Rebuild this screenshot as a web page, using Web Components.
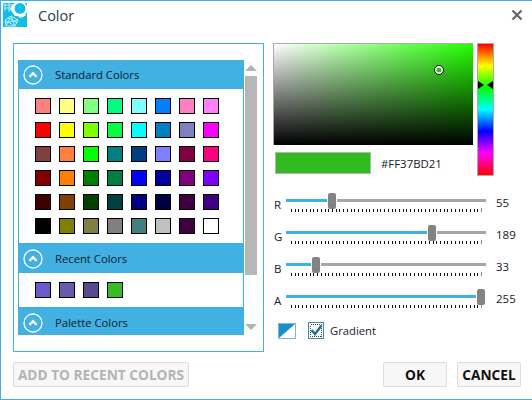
<!DOCTYPE html>
<html>
<head>
<meta charset="utf-8">
<title>Color</title>
<style>
    html, body { margin: 0; padding: 0; background: #fff; }
    body { font-family: "Open Sans", "Noto Sans", sans-serif; }
</style>
</head>
<body>
<color-dialog></color-dialog>

<script>
const UI_FONT = '"Open Sans", "Noto Sans", sans-serif';

class ColorSwatch extends HTMLElement {
    constructor() {
        super();
        this.attachShadow({ mode: 'open' });
        this.shadowRoot.innerHTML = `
            <style>
                :host {
                    display: block;
                    width: 16px;
                    height: 16px;
                    box-sizing: border-box;
                    border: 1px solid #000;
                    background: var(--swatch, #fff);
                }
            </style>
        `;
    }

    connectedCallback() {
        this.style.setProperty('--swatch', this.getAttribute('color'));
    }
}
customElements.define('color-swatch', ColorSwatch);

class ColorSection extends HTMLElement {
    constructor() {
        super();
        this.attachShadow({ mode: 'open' });
        this.shadowRoot.innerHTML = `
            <style>
                :host { display: block; }
                .head {
                    display: flex;
                    align-items: center;
                    height: 30px;
                    background: #41b0e2;
                    color: #0c1c28;
                    font-size: 11.25px;
                }
                svg { margin: 2px 0 0 5px; width: 20px; height: 20px; flex: none; }
                .label { margin-left: 12px; }
                .body {
                    display: grid;
                    grid-template-columns: repeat(8, 16px);
                    gap: 8px;
                    padding: 9px 16px;
                    border: solid #41b0e2;
                    border-width: 0 1px;
                    background: #fff;
                }
            </style>
            <div class="head">
                <svg viewBox="0 0 20 20" fill="none" stroke="#fff">
                    <circle cx="10" cy="10" r="9" stroke-width="1.3"/>
                    <path d="M6.4 11.8 L10 8.2 L13.6 11.8" stroke-width="2.4"/>
                </svg>
                <span class="label"></span>
            </div>
            <div class="body"><slot></slot></div>
        `;
    }

    connectedCallback() {
        this.shadowRoot.querySelector('.label').textContent = this.getAttribute('label');
    }
}
customElements.define('color-section', ColorSection);

class PalettePanel extends HTMLElement {
    constructor() {
        super();
        this.attachShadow({ mode: 'open' });
        this.shadowRoot.innerHTML = `
            <style>
                :host {
                    display: flex;
                    flex: none;
                    box-sizing: border-box;
                    width: 251px;
                    height: 309px;
                    padding: 16px 6px 16px 4px;
                    gap: 1px;
                    border: 1px solid #41b0e2;
                    background: #fff;
                }
                .view { width: 226px; height: 275px; overflow: hidden; flex: none; }
                .inner { margin-top: -1px; }
                .bar {
                    display: flex;
                    flex-direction: column;
                    width: 12px;
                    flex: none;
                }
                .up, .down { width: 0; height: 0; border: solid transparent; border-width: 0 6px; }
                .up { margin-top: 5px; border-bottom: 6px solid #b4b4b4; }
                .down { margin-top: 49px; border-top: 6px solid #b4b4b4; }
                .thumb { width: 12px; height: 199px; margin-top: 5px; background: #b7b7b7; }
            </style>
            <div class="view"><div class="inner"><slot></slot></div></div>
            <div class="bar">
                <div class="up"></div>
                <div class="thumb"></div>
                <div class="down"></div>
            </div>
        `;
    }

}
customElements.define('palette-panel', PalettePanel);

class ColorPicker extends HTMLElement {
    constructor() {
        super();
        this.attachShadow({ mode: 'open' });
        this.shadowRoot.innerHTML = `
            <style>
                :host { display: flex; gap: 4px; height: 133px; }
                .left { width: 200px; flex: none; }
                .field {
                    position: relative;
                    box-sizing: border-box;
                    width: 200px;
                    height: 102px;
                    border: solid #a9a9a9;
                    border-width: 1px 0 0 1px;
                    background:
                        linear-gradient(to bottom, rgba(0,0,0,0), #000),
                        linear-gradient(to right, #fff, #22ff00);
                }
                .marker {
                    position: absolute;
                    left: 160px;
                    top: 21px;
                    box-sizing: border-box;
                    width: 10px;
                    height: 10px;
                    border: 1px solid #111;
                    border-radius: 50%;
                    background: radial-gradient(circle, #37bd21 0 2.2px, #fff 2.7px);
                }
                .row { display: flex; align-items: center; margin-top: 7px; padding-left: 2px; }
                .current {
                    box-sizing: border-box;
                    width: 96px;
                    height: 22px;
                    border: 1px solid #b5b5b5;
                    background: #32bb20;
                }
                .hex { margin-left: 10px; font-size: 11.4px; color: #14202c; }
                .hue {
                    position: relative;
                    box-sizing: border-box;
                    width: 17px;
                    border: 1px solid #a9a9a9;
                    background: linear-gradient(to bottom,
                        #f00, #ff0 16.6%, #0f0 33.3%, #0ff 50%, #00f 66.6%, #f0f 83.3%, #f00);
                }
                .hue i {
                    position: absolute;
                    top: 37px;
                    width: 0;
                    height: 0;
                    border: solid transparent;
                    border-width: 4px 0;
                }
                .hue .a { left: 0; border-left: 6px solid #000; }
                .hue .b { right: 0; border-right: 6px solid #000; }
            </style>
            <div class="left">
                <div class="field"><div class="marker"></div></div>
                <div class="row">
                    <div class="current"></div>
                    <span class="hex">#FF37BD21</span>
                </div>
            </div>
            <div class="hue"><i class="a"></i><i class="b"></i></div>
        `;
    }
}
customElements.define('color-picker', ColorPicker);

class ColorSlider extends HTMLElement {
    constructor() {
        super();
        this.attachShadow({ mode: 'open' });
        this.shadowRoot.innerHTML = `
            <style>
                :host {
                    display: grid;
                    grid-template-columns: 13px 200px auto;
                    height: 32px;
                    font-size: 11.5px;
                    color: #14202c;
                }
                .name { padding: 3px 0 0 1px; line-height: 17px; }
                .track { position: relative; height: 32px; }
                .fill, .rest { position: absolute; top: 6px; height: 3px; }
                .fill { left: 0; background: #41b0e2; }
                .rest { right: 0; background: #a6a6a6; }
                .thumb {
                    position: absolute;
                    top: 0;
                    width: 8px;
                    height: 16px;
                    border-radius: 2px;
                    background: #838383;
                }
                svg { position: absolute; left: 5px; top: 15px; }
                .value { padding: 1px 0 0 10px; line-height: 17px; }
            </style>
            <div class="name"></div>
            <div class="track">
                <div class="fill"></div>
                <div class="rest"></div>
                <div class="thumb"></div>
                <svg width="192" height="5" shape-rendering="crispEdges"></svg>
            </div>
            <div class="value"></div>
        `;
    }

    connectedCallback() {
        const v = Number(this.getAttribute('value'));
        const x = Math.round(1.5 + v * 0.743);
        const root = this.shadowRoot;
        root.querySelector('.name').textContent = this.getAttribute('name');
        root.querySelector('.value').textContent = v;
        root.querySelector('.thumb').style.left = x + 'px';
        root.querySelector('.fill').style.width = (x - 1) + 'px';
        root.querySelector('.rest').style.left = (x + 9) + 'px';

        let ticks = '';
        for (let i = 0; i <= 51; i++) {
            const tx = Math.round(i * 190 / 51);
            const last = i === 51;
            ticks += `<rect x="${tx}" y="${last ? 0 : 1}" width="1" height="${last ? 4 : 3}" fill="${last ? '#888' : '#111'}"/>`;
        }
        root.querySelector('svg').innerHTML = ticks;
    }
}
customElements.define('color-slider', ColorSlider);

class DialogButton extends HTMLElement {
    constructor() {
        super();
        this.attachShadow({ mode: 'open' });
        this.shadowRoot.innerHTML = `
            <style>
                :host {
                    display: flex;
                    align-items: center;
                    justify-content: center;
                    box-sizing: border-box;
                    height: 25px;
                    border: 1px solid #dcdcdc;
                    border-radius: 2px;
                    background: #f7f7f7;
                    font-size: 13.7px;
                    font-weight: 700;
                    color: #111;
                }
                :host([disabled]) { color: #b4b4b4; }
            </style>
            <slot></slot>
        `;
    }
}
customElements.define('dialog-button', DialogButton);

class TitleBar extends HTMLElement {
    constructor() {
        super();
        this.attachShadow({ mode: 'open' });
        this.shadowRoot.innerHTML = `
            <style>
                :host {
                    display: flex;
                    align-items: center;
                    height: 24px;
                    padding-left: 2px;
                    font-size: 14.5px;
                    color: #2c3a46;
                }
                .logo { width: 24px; height: 24px; flex: none; }
                .title { margin-left: 11px; flex: 1; }
                .close { width: 12px; height: 12px; margin-right: 9px; }
            </style>
            <svg class="logo" viewBox="0 0 24 24">
                <rect width="24" height="24" fill="#10bde6"/>
                <path d="M0 2 H10 M1 5 H11 M2 0 V8 M6 0 V9" stroke="#b5ecf8" stroke-width="1"/>
                <path d="M9 2 L12 0 L14 3 L17 12 L21 10 L23 12 L20 14 L17 15 L15 13 L12 13 L9 9 L7 6 Z" fill="#fff"/>
                <circle cx="17" cy="6" r="7.4" fill="#fff"/>
                <circle cx="17" cy="5.4" r="5.4" fill="#10bde6"/>
                <path d="M2 17 L8 13 L15 17 L12 23 L3 23 Z M2 17 L12 23 M8 13 L3 23 M8 13 L12 23 M15 17 L2 20 M5 15 L15 20" fill="none" stroke="#c9f1fa" stroke-width="0.9"/>
            </svg>
            <span class="title"><slot></slot></span>
            <svg class="close" viewBox="0 0 12 12">
                <path d="M1.5 1.5 L10.5 10.5 M10.5 1.5 L1.5 10.5" stroke="#666" stroke-width="2.2"/>
            </svg>
        `;
    }
}
customElements.define('title-bar', TitleBar);

class GradientToggle extends HTMLElement {
    constructor() {
        super();
        this.attachShadow({ mode: 'open' });
        this.shadowRoot.innerHTML = `
            <style>
                :host {
                    display: flex;
                    align-items: center;
                    height: 17px;
                    margin-top: 1px;
                    padding-left: 5px;
                    font-size: 11.25px;
                    color: #14202c;
                }
                svg { display: block; flex: none; }
                .box { margin-left: 12px; }
                span { margin-left: 6px; }
            </style>
            <svg width="18" height="16" viewBox="0 0 18 16">
                <rect x="0.5" y="0.5" width="17" height="15" fill="#fff" stroke="#7fb6d0"/>
                <path d="M1 1 H17 L1 15 Z" fill="#1d8fc8"/>
            </svg>
            <svg class="box" width="16" height="17" viewBox="0 0 16 17" shape-rendering="crispEdges">
                <rect x="0.5" y="0.5" width="15" height="16" fill="#fff" stroke="#3f86a8"/>
                <rect x="2.5" y="2.5" width="11" height="12" fill="none" stroke="#444" stroke-dasharray="1 1"/>
                <path d="M3.5 8 L7 12 L13.5 3.5" fill="none" stroke="#1b6f9e" stroke-width="2.4" shape-rendering="auto"/>
            </svg>
            <span><slot></slot></span>
        `;
    }
}
customElements.define('gradient-toggle', GradientToggle);

const STANDARD_COLORS = [
    '#FF8080', '#FFFF80', '#80FF80', '#00FF80', '#80FFFF', '#0080FF', '#FF80C0', '#FF80FF',
    '#FF0000', '#FFFF00', '#80FF00', '#00FF40', '#00FFFF', '#0080C0', '#8080C0', '#FF00FF',
    '#804040', '#FF8040', '#00FF00', '#008080', '#004080', '#8080FF', '#800040', '#FF0080',
    '#800000', '#FF8000', '#008000', '#008040', '#0000FF', '#0000A0', '#800080', '#8000FF',
    '#400000', '#804000', '#004000', '#004040', '#000080', '#000040', '#400040', '#400080',
    '#000000', '#808000', '#808040', '#808080', '#408080', '#C0C0C0', '#400040', '#FFFFFF',
];
const RECENT_COLORS = ['#6A5ACD', '#6A5AAD', '#5A4A8D', '#37BD21'];

const swatches = (list) => list.map(c => `<color-swatch color="${c}"></color-swatch>`).join('');

class ColorDialog extends HTMLElement {
    constructor() {
        super();
        this.attachShadow({ mode: 'open' });
        this.shadowRoot.innerHTML = `
            <style>
                :host {
                    display: flex;
                    flex-direction: column;
                    box-sizing: border-box;
                    width: 532px;
                    height: 400px;
                    padding-top: 2px;
                    border: solid #41b0e2;
                    border-width: 1px 0 1px 1px;
                    background: #fff;
                    font-family: ${UI_FONT};
                }
                .main { display: flex; gap: 9px; height: 309px; margin-top: 16px; padding-left: 12px; }
                .right { width: 250px; }
                .sliders { margin-top: 17px; }
                .foot { display: flex; height: 25px; margin-top: 10px; padding: 0 11px 0 12px; }
                .add { width: 176px; }
                .ok { width: 64px; margin-left: auto; }
                .cancel { width: 64px; margin-left: 10px; }
            </style>
            <title-bar>Color</title-bar>
            <div class="main">
                <palette-panel>
                    <color-section label="Standard Colors">${swatches(STANDARD_COLORS)}</color-section>
                    <color-section label="Recent Colors">${swatches(RECENT_COLORS)}</color-section>
                    <color-section label="Palette Colors"></color-section>
                </palette-panel>
                <div class="right">
                    <color-picker></color-picker>
                    <div class="sliders">
                        <color-slider name="R" value="55"></color-slider>
                        <color-slider name="G" value="189"></color-slider>
                        <color-slider name="B" value="33"></color-slider>
                        <color-slider name="A" value="255"></color-slider>
                    </div>
                    <gradient-toggle>Gradient</gradient-toggle>
                </div>
            </div>
            <div class="foot">
                <dialog-button class="add" disabled>ADD TO RECENT COLORS</dialog-button>
                <dialog-button class="ok">OK</dialog-button>
                <dialog-button class="cancel">CANCEL</dialog-button>
            </div>
        `;
    }
}
customElements.define('color-dialog', ColorDialog);
</script>
</body>
</html>
